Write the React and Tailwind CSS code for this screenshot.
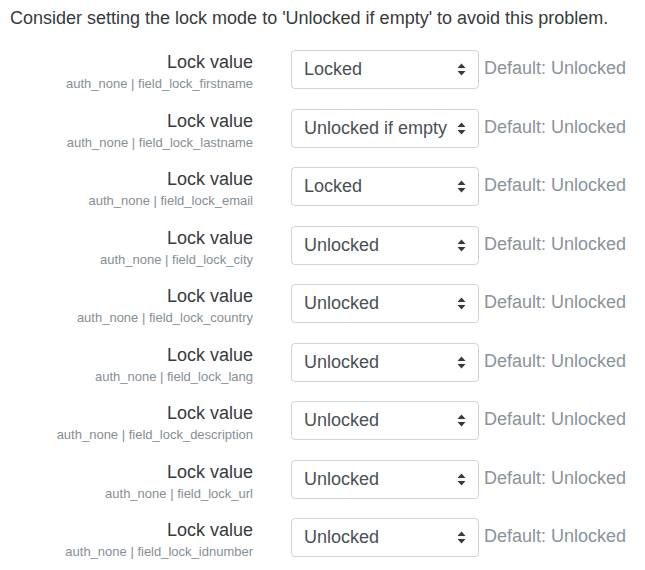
import React from 'react';

const rows = [
  { field: 'field_lock_firstname', value: 'Locked' },
  { field: 'field_lock_lastname', value: 'Unlocked if empty' },
  { field: 'field_lock_email', value: 'Locked' },
  { field: 'field_lock_city', value: 'Unlocked' },
  { field: 'field_lock_country', value: 'Unlocked' },
  { field: 'field_lock_lang', value: 'Unlocked' },
  { field: 'field_lock_description', value: 'Unlocked' },
  { field: 'field_lock_url', value: 'Unlocked' },
  { field: 'field_lock_idnumber', value: 'Unlocked' },
];

function Arrows() {
  return (
    <svg width="9" height="13" viewBox="0 0 9 13" className="shrink-0">
      <path d="M4.5 0.5 L8.5 5 L0.5 5 Z" fill="#373a3c" />
      <path d="M4.5 12.5 L8.5 8 L0.5 8 Z" fill="#373a3c" />
    </svg>
  );
}

function LockRow({ field, value }) {
  return (
    <div className="flex h-[58.5px] items-start">
      <div className="w-[253px] shrink-0 text-right">
        <div className="text-[18px] leading-[24px] text-[#373a3c]">Lock value</div>
        <div className="text-[13px] leading-[20px] text-[#868e96]">auth_none | {field}</div>
      </div>
      <div className="ml-[38px] flex h-[39px] w-[188px] shrink-0 items-center justify-between rounded-[4px] border border-[#ced4da] bg-white pl-[12px] pr-[12px]">
        <span className="text-[18px] text-[#495057]">{value}</span>
        <Arrows />
      </div>
      <div className="ml-[5px] pt-[6px] text-[18px] leading-[24px] text-[#8a939b]">Default: Unlocked</div>
    </div>
  );
}

export default function App() {
  return (
    <div className="min-h-[570px] bg-white pl-[10px] pt-[6px]" style={{ fontFamily: '"Liberation Sans", Arial, sans-serif' }}>
      <p className="text-[18px] leading-[24px] text-[#373a3c]">
        Consider setting the lock mode to 'Unlocked if empty' to avoid this problem.
      </p>
      <div className="mt-[20px] -ml-[10px]">
        {rows.map((r) => (
          <LockRow key={r.field} {...r} />
        ))}
      </div>
    </div>
  );
}
